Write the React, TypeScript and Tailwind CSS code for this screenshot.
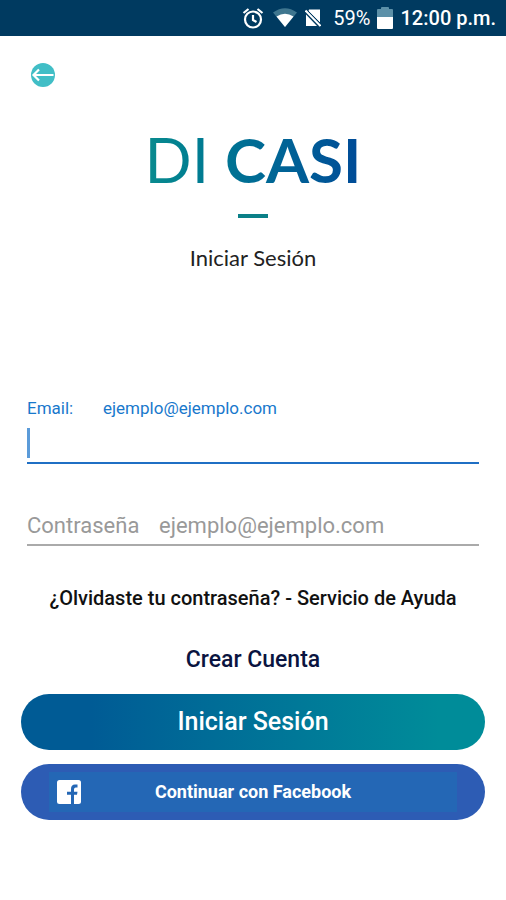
function StatusBar() {
  return (
    <header className="flex h-9 items-center justify-end bg-[#003a60] pr-2.5 text-white">
      <svg className="mr-2 size-6" viewBox="0 0 24 24" fill="none" stroke="#fff" strokeWidth="2.200" aria-hidden="true">
        <circle cx="12" cy="13.5" r="8" />
        <path d="M12 9v5l3.500 2" />
        <path d="M2.500 7 7.500 3M21.500 7 16.500 3" />
      </svg>
      <svg className="mr-2 h-5 w-6" viewBox="0 0 24 20" aria-hidden="true">
        <path d="M0 4.500Q12-4 24 4.500L12 19Z" fill="#3f768f" />
        <path d="M3.500 8.500Q12 3 20.500 8.500L12 19Z" fill="#fff" />
      </svg>
      <svg className="mr-3 h-5 w-4" viewBox="0 0 16 20" aria-hidden="true">
        <path d="M4 1.500H15V14.500L3.500 3ZM1 6.500 12 18H1Z" fill="#fff" />
        <path d="M0.500 2.500 15.500 18" stroke="#fff" strokeWidth="2" />
        <path d="M3 3 15.500 15.500" stroke="#003a60" strokeWidth="1" />
      </svg>
      <span className="mr-1 text-xl leading-6">59%</span>
      <svg className="mr-1.5 h-6 w-5" viewBox="0 0 20 24" aria-hidden="true">
        <path d="M2 4Q2 3 3 3H6V2Q6 1 7 1H13Q14 1 14 2V3H17Q18 3 18 4V11H2Z" fill="#5c90a8" />
        <path d="M2 11H18V22Q18 23 17 23H3Q2 23 2 22Z" fill="#fff" />
      </svg>
      <time className="text-xl leading-6 font-medium">12:00 p.m.</time>
    </header>
  );
}

function BackIcon() {
  return (
    <svg className="size-6" viewBox="0 0 24 24" fill="none" aria-hidden="true">
      <circle cx="12" cy="12" r="12" fill="#41bec6" />
      <path d="M2.500 12H22.500M8 6.500 2.500 12 8 17.500" stroke="#fff" strokeWidth="2.200" />
    </svg>
  );
}

function FacebookIcon() {
  return (
    <svg className="size-6" viewBox="0 0 24 24" aria-hidden="true">
      <rect width="24" height="24" rx="2.500" fill="#fff" />
      <path
        d="M14 24V14.800H10V11.800H14V9Q14 4.500 18 4.500H20.500V7.500H18.800Q17 7.500 17 9.400V11.800H20.500L20 14.800H17V24Z"
        fill="#2467b5"
      />
    </svg>
  );
}

export default function App() {
  return (
    <div className="min-h-screen bg-white font-['Roboto',sans-serif]">
      <StatusBar />
      <main className="pt-[27px]">
        <button type="button" aria-label="Volver" className="ml-[31px] block size-6">
          <BackIcon />
        </button>

        <div className="mt-9 flex flex-col items-center font-['Lato',sans-serif]">
          <h1 className="bg-linear-to-r from-[#0b8b8e] to-[#004b98] bg-clip-text text-[62px] leading-[72px] font-normal text-transparent">
            DI <span className="font-bold">CASI</span>
          </h1>
          <div className="mt-[19px] h-1 w-[30px] bg-[#0b8088]" />
          <h2 className="mt-[26px] text-[22px] leading-7 text-[#222]">Iniciar Sesión</h2>
        </div>

        <form className="mt-[126px] px-[21px]">
          <div className="mx-1.5 border-b-2 border-[#1f6fc4]">
            <div className="flex text-[17px] leading-5 text-[#1878cc]">
              <label htmlFor="email" className="w-[76px]">Email:</label>
              <span>ejemplo@ejemplo.com</span>
            </div>
            <div className="mt-2.5 flex h-[34px]">
              <span className="h-[30px] w-[3px] bg-[#5b9bd9]" />
              <input id="email" type="email" className="min-w-0 flex-1 text-[22px] outline-none" />
            </div>
          </div>

          <div className="mx-1.5 mt-12 flex border-b-2 border-[#aaa] pb-1 text-[22px] leading-7 text-[#999]">
            <label htmlFor="password" className="w-[132px]">Contraseña</label>
            <input
              id="password"
              type="password"
              placeholder="ejemplo@ejemplo.com"
              className="min-w-0 flex-1 outline-none placeholder:text-[#999]"
            />
          </div>

          <div className="mt-10 flex flex-col items-center font-medium">
            <a href="#ayuda" className="text-xl leading-6 text-[#111]">
              ¿Olvidaste tu contraseña? - Servicio de Ayuda
            </a>
            <a href="#crear" className="mt-9 text-[23px] leading-7 text-[#0a1440]">
              Crear Cuenta
            </a>
          </div>

          <button
            type="submit"
            className="mt-5 block h-14 w-full rounded-full bg-linear-to-r from-[#005b95] from-15% to-[#008c99] to-90% text-[25px] font-medium text-white"
          >
            Iniciar Sesión
          </button>

          <button
            type="button"
            className="mt-3.5 flex h-14 w-full items-center rounded-full bg-[#2d5cb4] px-7 text-lg font-bold text-white"
          >
            <span className="grid h-10 flex-1 grid-cols-[24px_1fr_24px] items-center bg-[#2467b5] px-2">
              <FacebookIcon />
              <span>Continuar con Facebook</span>
            </span>
          </button>
        </form>
      </main>
    </div>
  );
}
